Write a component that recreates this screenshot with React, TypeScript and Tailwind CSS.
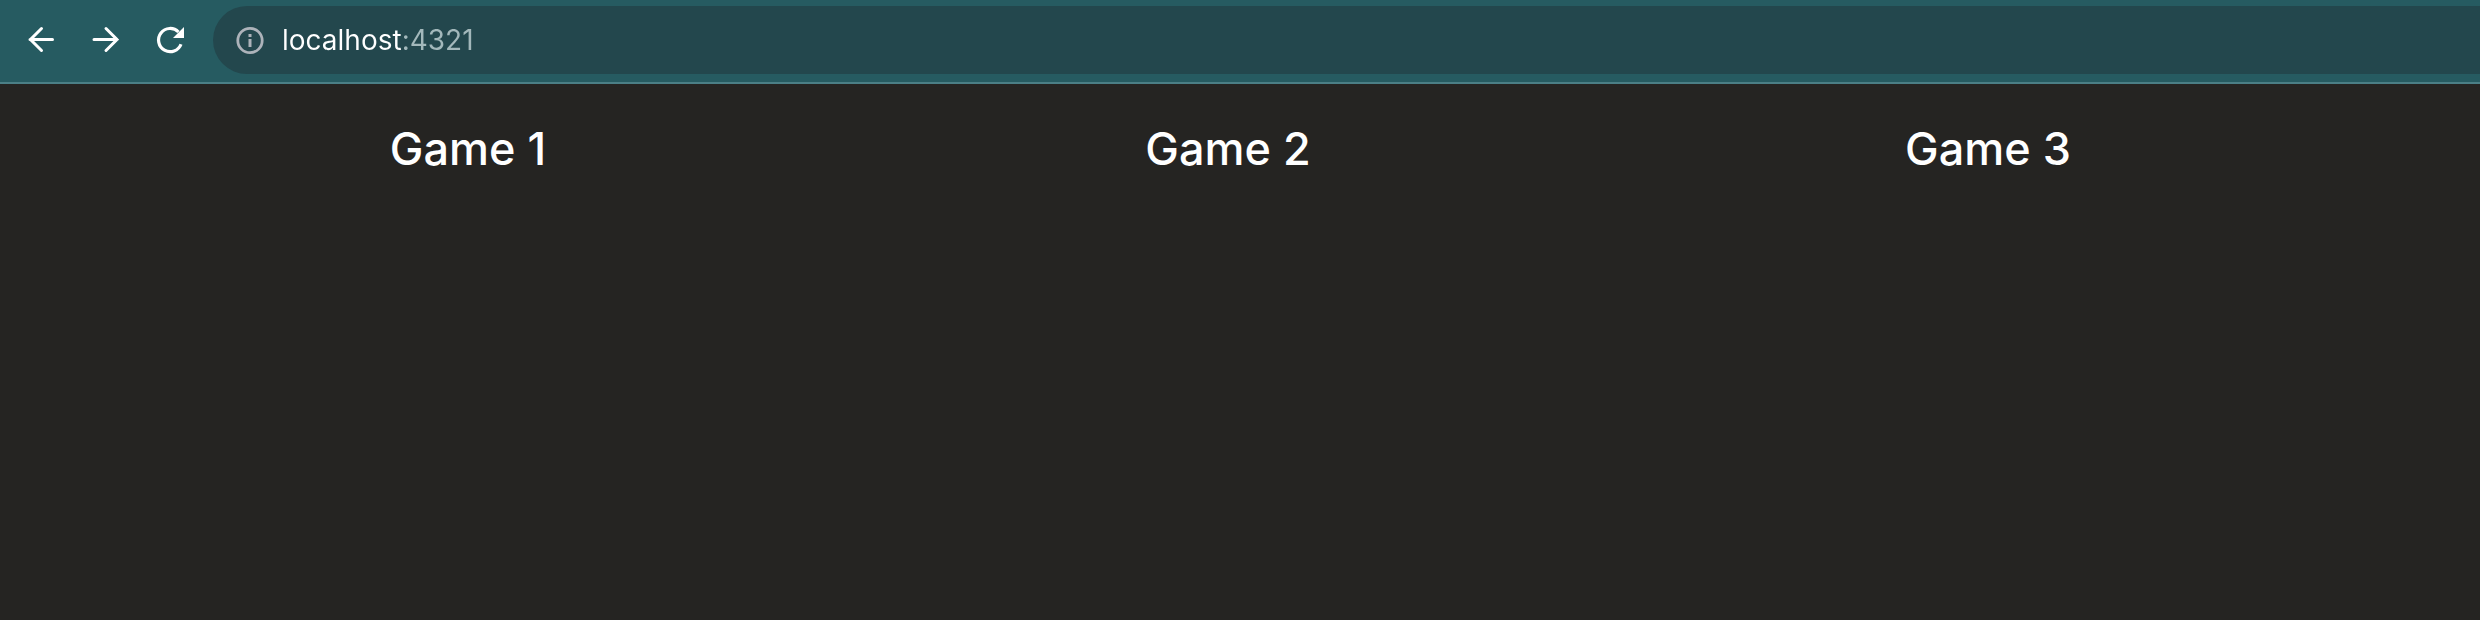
import React from "react";

const games = ["Game 1", "Game 2", "Game 3"];

const BackIcon = () => (
  <svg viewBox="0 0 32 32" className="size-8" fill="none" stroke="currentColor" strokeWidth="3" strokeLinecap="round">
    <path d="M27.5 15.5H5M16.5 4.5l-11 11 11 11" />
  </svg>
);

const ForwardIcon = () => (
  <svg viewBox="0 0 32 32" className="size-8" fill="none" stroke="currentColor" strokeWidth="3" strokeLinecap="round">
    <path d="M5 15.5H28M17 4.5l11 11-11 11" />
  </svg>
);

const ReloadIcon = () => (
  <svg viewBox="0 0 32 32" className="size-8">
    <path
      d="M28 20.2A11.6 11.6 0 1 1 25.5 8"
      fill="none"
      stroke="currentColor"
      strokeWidth="3.2"
    />
    <path d="M31 3v11H20z" fill="currentColor" />
  </svg>
);

const InfoIcon = () => (
  <svg viewBox="0 0 32 32" className="size-8">
    <circle cx="16" cy="16.5" r="12.2" fill="none" stroke="currentColor" strokeWidth="2.8" />
    <path d="M14.5 10h3v3h-3zM14.5 15h3v8h-3z" fill="currentColor" />
  </svg>
);

const Toolbar = () => {
  return (
    <header className="flex items-center gap-8 bg-[#265b61] border-b-2 border-[#4b7f86] pt-1.5 pb-2 pl-[25px] text-white">
      <button type="button" aria-label="Back">
        <BackIcon />
      </button>
      <button type="button" aria-label="Forward">
        <ForwardIcon />
      </button>
      <button type="button" aria-label="Reload">
        <ReloadIcon />
      </button>
      <div className="flex flex-1 items-center gap-4 h-[68px] -ml-1 rounded-l-full bg-[#23474d] pl-[21px]">
        <button type="button" aria-label="Site information" className="text-[#adb3ba]">
          <InfoIcon />
        </button>
        {/* host is white, port is dimmed */}
        <input
          type="text"
          aria-label="Address"
          defaultValue="localhost:4321"
          spellCheck={false}
          className="flex-1 bg-[linear-gradient(to_right,#ffffff_119px,#a3b8bb_119px)] bg-clip-text text-transparent text-[28px] leading-9 outline-none font-['Inter',sans-serif]"
        />
      </div>
    </header>
  );
};

const App = () => {
  return (
    <div className="min-h-screen bg-[#252422] font-['Inter',sans-serif]">
      <Toolbar />
      <main className="grid grid-cols-3 pt-9 pl-[88px] pr-[112px]">
        {games.map((game) => (
          <h2 key={game} className="text-center text-[45px] leading-[58px] font-medium text-white">
            {game}
          </h2>
        ))}
      </main>
    </div>
  );
};

export default App;
